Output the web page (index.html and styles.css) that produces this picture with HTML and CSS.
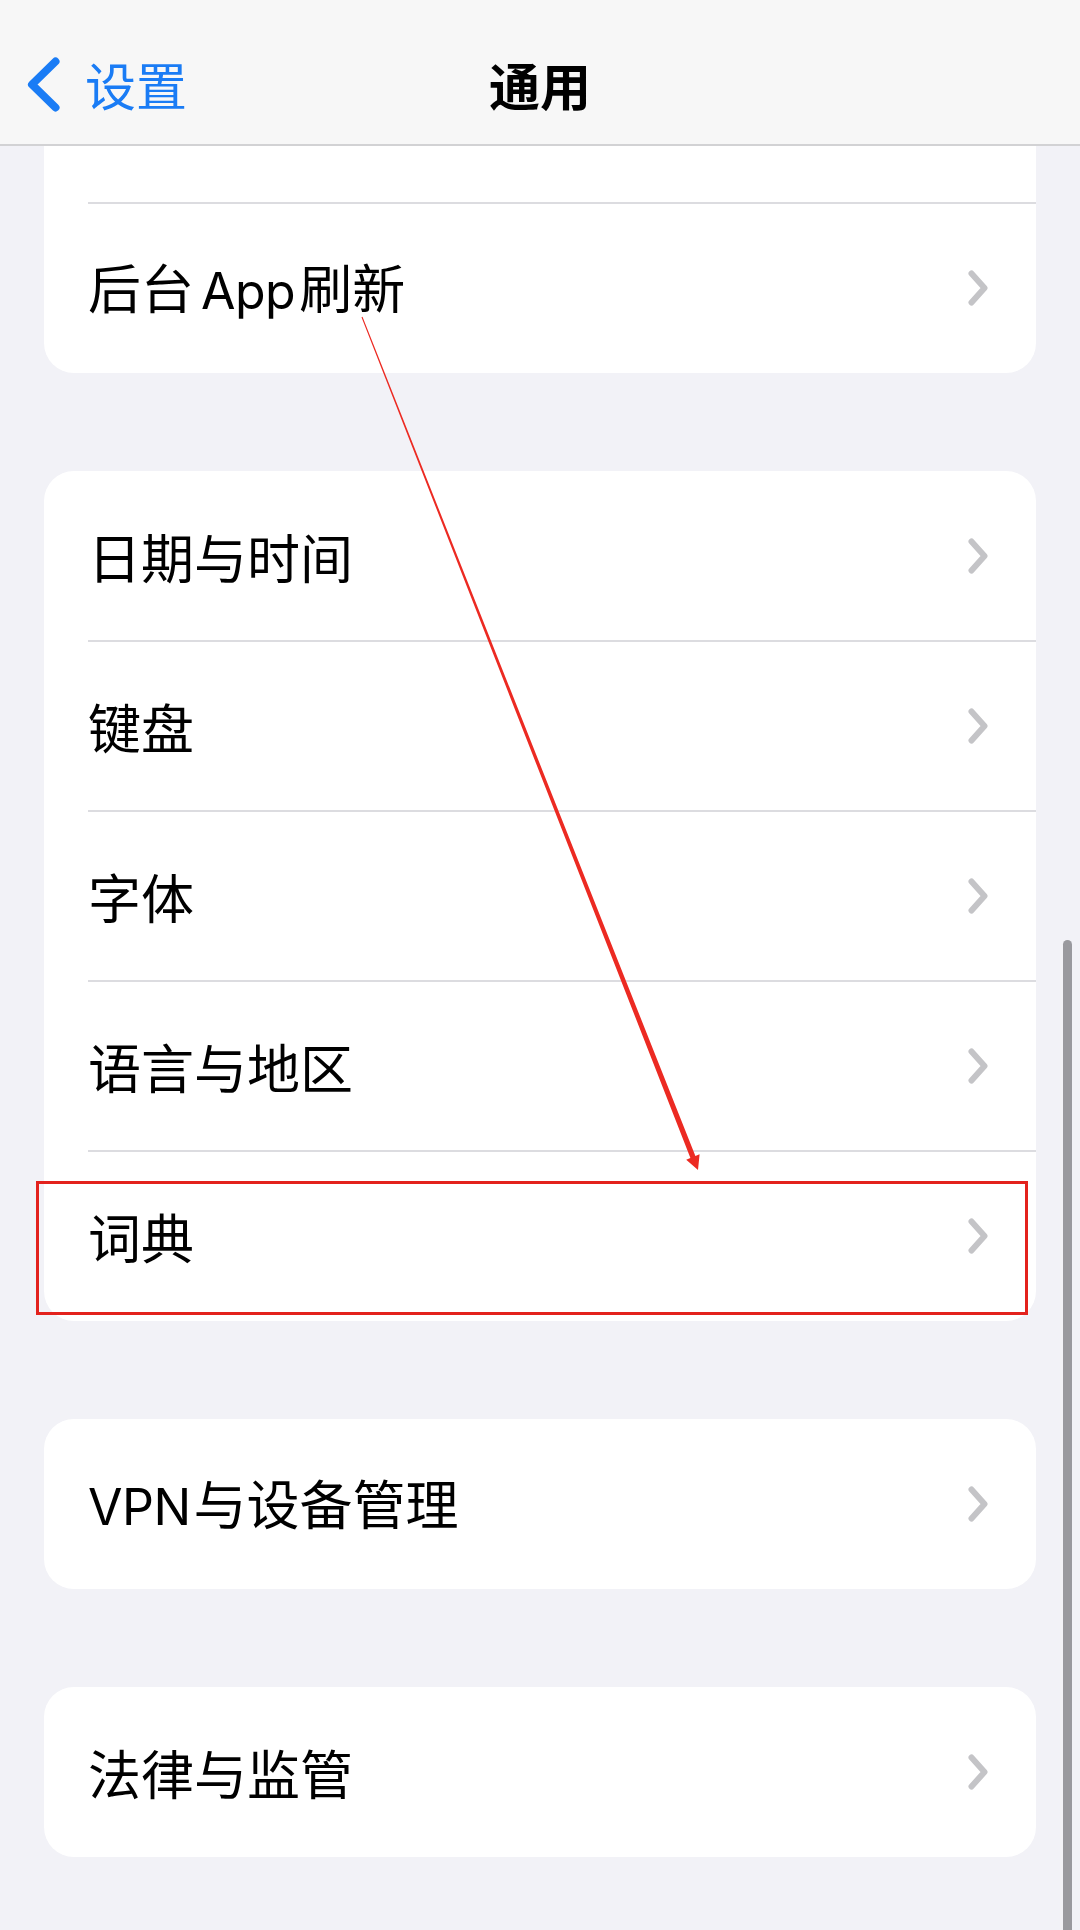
FILE: index.html
```html
<!DOCTYPE html>
<html lang="zh-CN">
<head>
<meta charset="utf-8">
<title>通用</title>
<link rel="stylesheet" href="styles.css">
</head>
<body>
<div class="screen">
  <main class="list">
    <section class="card">
      <div class="row"><span class="label"></span></div>
      <div class="row"><span class="label">后台<span class="latin">App</span>刷新</span><svg class="chev" viewBox="0 0 20 36"><path d="M3.5 3.5 L16.5 18 L3.5 32.5"/></svg></div>
    </section>
    <section class="card">
      <div class="row"><span class="label">日期与时间</span><svg class="chev" viewBox="0 0 20 36"><path d="M3.5 3.5 L16.5 18 L3.5 32.5"/></svg></div>
      <div class="row"><span class="label">键盘</span><svg class="chev" viewBox="0 0 20 36"><path d="M3.5 3.5 L16.5 18 L3.5 32.5"/></svg></div>
      <div class="row"><span class="label">字体</span><svg class="chev" viewBox="0 0 20 36"><path d="M3.5 3.5 L16.5 18 L3.5 32.5"/></svg></div>
      <div class="row"><span class="label">语言与地区</span><svg class="chev" viewBox="0 0 20 36"><path d="M3.5 3.5 L16.5 18 L3.5 32.5"/></svg></div>
      <div class="row row-marked"><span class="label">词典</span><svg class="chev" viewBox="0 0 20 36"><path d="M3.5 3.5 L16.5 18 L3.5 32.5"/></svg><span class="mark-box"></span></div>
    </section>
    <section class="card">
      <div class="row"><span class="label"><span class="latin latin-lead">VPN</span>与设备管理</span><svg class="chev" viewBox="0 0 20 36"><path d="M3.5 3.5 L16.5 18 L3.5 32.5"/></svg></div>
    </section>
    <section class="card">
      <div class="row"><span class="label">法律与监管</span><svg class="chev" viewBox="0 0 20 36"><path d="M3.5 3.5 L16.5 18 L3.5 32.5"/></svg></div>
    </section>
  </main>

  <header class="navbar">
    <div class="nav-back">
      <svg class="back-chev" viewBox="0 0 33 55"><path d="M28.5 4.5 L5 27.5 L28.5 50.5"/></svg>
      <span class="back-label">设置</span>
    </div>
    <h1 class="nav-title">通用</h1>
    <div class="nav-spacer"></div>
  </header>

  <div class="scrollbar"></div>

  <svg class="annotation" viewBox="0 0 1080 1930">
    <polygon points="362.5,316.8 695.4,1156.0 699.6,1154.3 698,1170 686.2,1159.7 690.4,1158.0 361.5,317.2"/>
  </svg>
</div>
</body>
</html>
```
FILE: styles.css
```css
* { box-sizing: border-box; }

html, body {
  margin: 0;
  padding: 0;
}

body {
  background: #f2f2f7;
  font-family: "Inter", "Noto Sans CJK SC", sans-serif;
  color: #000;
}

.screen {
  position: relative;
  width: 1080px;
  height: 1930px;
  overflow: hidden;
  background: #f2f2f7;
}

/* grouped list */
.list {
  display: flex;
  flex-direction: column;
  gap: 98px;
  padding: 33px 44px 0;
}

.card {
  background: #fff;
  border-radius: 30px;
}

.row {
  position: relative;
  display: flex;
  align-items: center;
  justify-content: space-between;
  height: 170px;
  padding: 0 48px 0 44px;
}

.row + .row::before {
  content: "";
  position: absolute;
  left: 44px;
  right: 0;
  top: -1px;
  height: 2px;
  background: #dcdce0;
}

.label {
  font-family: "Noto Sans CJK SC", sans-serif;
  font-size: 53px;
  line-height: 1;
  letter-spacing: 0;
}

/* latin words mixed into CJK labels get a little breathing room */
.latin {
  font-family: "Inter", "Noto Sans CJK SC", sans-serif;
  font-size: 50px;
  letter-spacing: -0.5px;
  margin: 0 4px 0 7px;
}

.latin-lead {
  margin: 0 3px 0 0;
}

.chev {
  width: 20px;
  height: 36px;
  flex: none;
}

.chev path {
  fill: none;
  stroke: #c4c4c7;
  stroke-width: 6;
  stroke-linecap: round;
  stroke-linejoin: round;
}

/* highlight frame around a row */
.mark-box {
  position: absolute;
  left: -8px;
  right: 8px;
  top: 30px;
  bottom: 6px;
  border: 3px solid #e3221d;
  pointer-events: none;
}

/* navigation bar */
.navbar {
  position: absolute;
  top: 0;
  left: 0;
  width: 1080px;
  height: 146px;
  padding-top: 24px;
  display: grid;
  grid-template-columns: 1fr auto 1fr;
  align-items: center;
  background: rgba(247, 247, 247, 0.98);
  border-bottom: 2px solid #d2d2d4;
}

.nav-back {
  display: flex;
  align-items: center;
  padding-left: 27px;
  gap: 25px;
}

.back-chev {
  width: 33px;
  height: 55px;
}

.back-chev path {
  fill: none;
  stroke: #1a7cf5;
  stroke-width: 8;
  stroke-linecap: round;
  stroke-linejoin: round;
}

.back-label {
  font-family: "Noto Sans CJK SC", sans-serif;
  font-size: 51px;
  line-height: 1;
  color: #1a7cf5;
}

.nav-title {
  margin: 0;
  font-family: "Noto Sans CJK SC", sans-serif;
  font-size: 51px;
  font-weight: 700;
  line-height: 1;
}

/* scroll indicator */
.scrollbar {
  position: absolute;
  right: 8px;
  top: 940px;
  bottom: -10px;
  width: 9px;
  border-radius: 5px;
  background: #99999e;
}

.annotation {
  position: absolute;
  left: 0;
  top: 0;
  width: 1080px;
  height: 1930px;
  pointer-events: none;
}

.annotation polygon {
  fill: #ec2a22;
}
```
